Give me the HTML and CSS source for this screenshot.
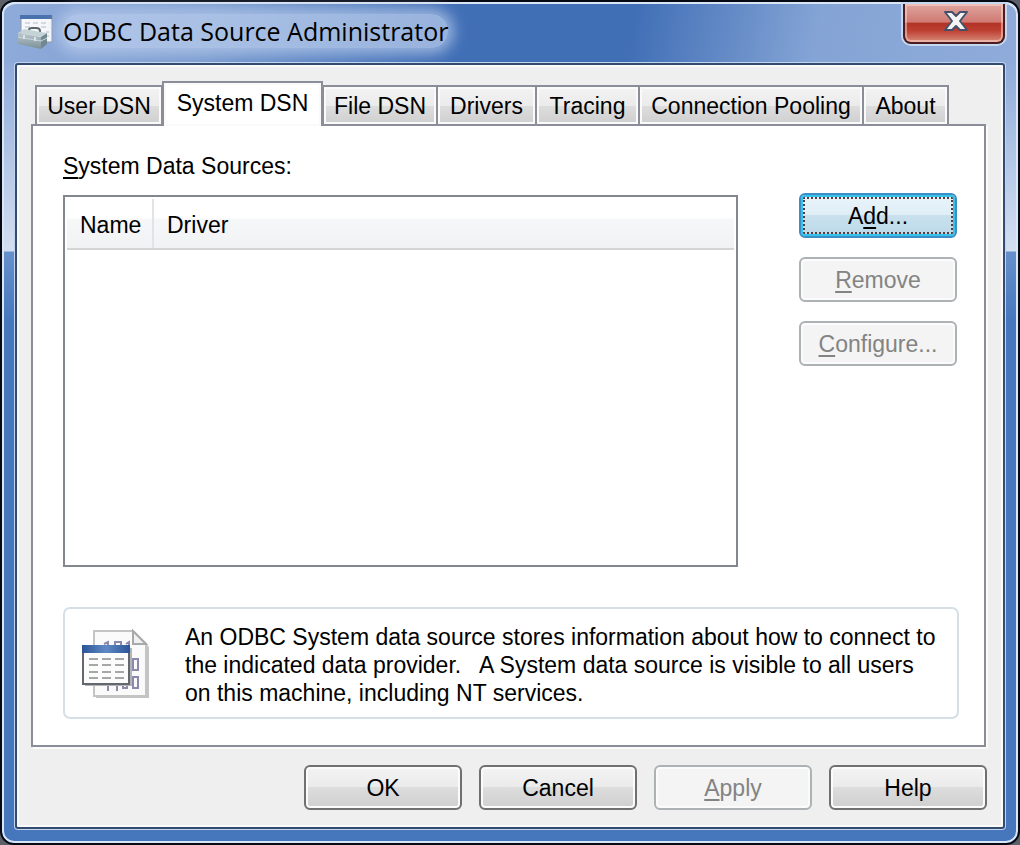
FILE: index.html
```html
<!DOCTYPE html>
<html lang="en">
<head>
  <meta charset="UTF-8">
  <meta name="viewport" content="width=device-width, initial-scale=1.0">
  <title>ODBC Data Source Administrator</title>
  <link rel="stylesheet" href="styles.css">
</head>
<body>
  <div class="window">
    <header class="titlebar">
      <svg class="app-icon" width="36" height="36" viewBox="0 0 36 36" aria-hidden="true">
        <defs>
          <linearGradient id="box" x1="0" y1="0" x2="0" y2="1">
            <stop offset="0" stop-color="#b9c8cd"/>
            <stop offset="1" stop-color="#7b8f98"/>
          </linearGradient>
        </defs>
        <rect x="3" y="2" width="31" height="26" fill="#f6f7fa" stroke="#8d99ab"/>
        <rect x="2" y="1" width="32" height="4" fill="#4a72ae"/>
        <path d="M7 9h5M15 9h5M23 9h5M7 13h5M23 13h5M28 18h3M28 22h3" stroke="#d5d9e0" stroke-width="2"/>
        <path d="M11 18v-2q0-2 3-2h4q4 0 4 3v2" fill="none" stroke="#59656b" stroke-width="2"/>
        <path d="M0 19l6-4 23 4-6 4z" fill="#c6d3d6"/>
        <path d="M0 19l23 4v12L0 30z" fill="url(#box)"/>
        <path d="M23 23l6-4v11l-6 5z" fill="#718791"/>
        <path d="M0 23l23 4 6-3" fill="none" stroke="#c9d6d9"/>
        <path d="M6 21v4M17 23v4" stroke="#dbe5e6" stroke-width="2"/>
      </svg>
      <h1 class="title">ODBC Data Source Administrator</h1>
      <button class="close-btn" type="button" aria-label="Close">
        <svg width="26" height="24" viewBox="0 0 26 24" aria-hidden="true">
          <path d="M2 3h7l4 4 4-4h7l-7 9 7 9h-7l-4-4-4 4H2l7-9z" fill="#f4f4f4" stroke="#46506a" stroke-width="2" stroke-linejoin="round"/>
        </svg>
      </button>
    </header>

    <main class="client">
      <div class="tabs" role="tablist">
        <button class="tab" role="tab" type="button">User DSN</button>
        <button class="tab active" role="tab" type="button" aria-selected="true">System DSN</button>
        <button class="tab" role="tab" type="button">File DSN</button>
        <button class="tab" role="tab" type="button">Drivers</button>
        <button class="tab" role="tab" type="button">Tracing</button>
        <button class="tab" role="tab" type="button">Connection Pooling</button>
        <button class="tab" role="tab" type="button">About</button>
      </div>

      <section class="panel" role="tabpanel">
        <div class="sources">
          <div class="source-list">
            <div class="list-label" id="list-label"><u>S</u>ystem Data Sources:</div>
            <div class="list-box">
              <table class="list-table" aria-labelledby="list-label">
                <thead>
                  <tr>
                    <th class="col-name">Name</th>
                    <th>Driver</th>
                  </tr>
                </thead>
                <tbody></tbody>
              </table>
            </div>
          </div>
          <div class="side-buttons">
            <button class="btn focused" type="button">A<u>d</u>d...</button>
            <button class="btn" type="button" disabled><u>R</u>emove</button>
            <button class="btn" type="button" disabled><u>C</u>onfigure...</button>
          </div>
        </div>

        <div class="info">
          <svg class="info-icon" width="72" height="76" viewBox="0 0 72 76" aria-hidden="true">
            <defs>
              <linearGradient id="bar" x1="0" y1="0" x2="1" y2="0">
                <stop offset="0" stop-color="#2c5598"/>
                <stop offset="0.5" stop-color="#6089c4"/>
                <stop offset="1" stop-color="#2c5598"/>
              </linearGradient>
            </defs>
            <path d="M16 6h39l14 14v51H16z" fill="#c4c4c4"/>
            <path d="M14 4h39l13 13v52H14z" fill="#fafafa" stroke="#c4c4c4" stroke-width="2"/>
            <path d="M53 4v13h13z" fill="#f0f0f0" stroke="#a9a9a9" stroke-width="2"/>
            <path d="M24 17l4-2v9M35 24v-9h6v9M46 17l3-2v9M28 58v6M37 58v6" fill="none" stroke="#8f88ad" stroke-width="2"/>
            <path d="M53 32h5v11h-5zM53 50h5v11h-5zM43 52h4v9h-4z" fill="none" stroke="#8f88ad" stroke-width="2"/>
            <path d="M5 21h47v38H5z" fill="#b2b4b8"/>
            <rect x="3" y="20" width="46" height="37" fill="#fcfcfc" stroke="#65676e" stroke-width="2"/>
            <rect x="2" y="18" width="48" height="8" fill="url(#bar)"/>
            <path d="M9 32h9M22 32h9M35 32h9M9 38h9M22 38h9M35 38h9M9 45h9M22 45h9M35 45h9M9 51h9M22 51h9M35 51h9" stroke="#a5a8a5" stroke-width="2"/>
          </svg>
          <p class="info-text">An ODBC System data source stores information about how to connect to<br>
            the indicated data provider.&nbsp;&nbsp; A System data source is visible to all users<br>
            on this machine, including NT services.</p>
        </div>
      </section>

      <footer class="actions">
        <button class="btn" type="button">OK</button>
        <button class="btn" type="button">Cancel</button>
        <button class="btn" type="button" disabled><u>A</u>pply</button>
        <button class="btn" type="button">Help</button>
      </footer>
    </main>
  </div>
</body>
</html>
```
FILE: styles.css
```css
* {
  box-sizing: border-box;
}
body {
  margin: 0;
  background: #5d6068;
  color: #000;
  font-family: "Liberation Sans", Arial, sans-serif;
  font-size: 23px;
  line-height: 28px;
}
button {
  font: inherit;
  color: inherit;
  padding: 0;
}
u {
  text-underline-offset: 3px;
  text-decoration-thickness: 2px;
}

/* Window frame */
.window {
  display: flex;
  flex-direction: column;
  min-height: 100vh;
  border: 2px solid #060a14;
  border-radius: 14px;
  background: linear-gradient(#8fabda 60px, #d3dff1 249px, #6690cb 250px, #4677bd 320px, #4677bd);
  box-shadow: inset 0 0 0 2px #dbe6f5;
}
.titlebar {
  display: flex;
  align-items: flex-start;
  height: 61px;
  margin: 0 2px;
  padding: 0 11px 0 14px;
  border-top: 2px solid #dbe6f5;
  border-radius: 12px 12px 0 0;
  background: linear-gradient(100deg, #8fabda 0%, #7b9cd0 20%, #416fb6 43%, #416fb6 62%, #84a4d5 80%, #8fabda 100%);
}
.app-icon {
  margin-top: 10px;
}
.title {
  margin: 10px 0 0 9px;
  border-radius: 16px;
  background: rgba(190, 208, 238, 0.7);
  box-shadow: 0 0 14px 6px rgba(190, 208, 238, 0.7);
  font-family: "Open Sans", "Noto Sans", sans-serif;
  font-size: 25px;
  font-weight: 400;
  line-height: 34px;
}
.close-btn {
  display: flex;
  align-items: center;
  justify-content: center;
  width: 102px;
  height: 40px;
  margin-left: auto;
  padding: 0 0 4px 4px;
  border: 2px solid #4b1d20;
  border-top: 0;
  border-radius: 0 0 8px 8px;
  background: linear-gradient(#dfa49f, #cf7a72 48%, #b23324 50%, #bd4033 70%, #d98b79);
  box-shadow: inset 0 0 0 2px rgba(255, 220, 215, 0.5), 0 0 0 2px #c6d7f0;
}
.client {
  display: flex;
  flex: 1;
  flex-direction: column;
  margin: 0 13px 14px;
  padding: 16px 16px 17px 14px;
  border: 2px solid #344b70;
  border-radius: 3px;
  background: #efefef;
  box-shadow: 0 0 0 1px #c2d5ef, inset 0 0 0 2px #fafafa;
}

/* Tabs */
.tabs {
  display: grid;
  grid-template-columns: 127px 161px 114px 99px 103px 224px 86px;
  align-items: end;
  margin-left: 4px;
}
.tab {
  height: 39px;
  border: 2px solid #8b8e98;
  border-left-width: 1px;
  border-right-width: 1px;
  border-bottom: 0;
  background: linear-gradient(#f3f3f3, #ebebeb 50%, #dddddd 52%, #cfcfcf);
  box-shadow: inset 0 0 0 2px #fafafa;
  white-space: nowrap;
}
.tab:first-child {
  border-left-width: 2px;
}
.tab:last-child {
  border-right-width: 2px;
}
.tab.active {
  z-index: 1;
  height: 45px;
  margin-bottom: -2px;
  padding-bottom: 4px;
  border-width: 2px 2px 0;
  background: #fff;
}
.panel {
  display: flex;
  flex: 1;
  flex-direction: column;
  gap: 40px;
  margin-right: 1px;
  padding: 26px 25px 26px 30px;
  border: 2px solid #8b8e98;
  background: #fff;
  box-shadow: 2px 2px 0 #fafafa;
}

/* Data sources */
.sources {
  display: flex;
  flex: 1;
  gap: 61px;
}
.source-list {
  display: flex;
  flex: 1;
  flex-direction: column;
  gap: 15px;
}
.list-box {
  flex: 1;
  padding: 2px;
  border: 2px solid #828790;
}
.list-table {
  width: 100%;
  border-collapse: collapse;
  table-layout: fixed;
}
.list-table th {
  height: 50px;
  padding: 2px 13px 0;
  border-bottom: 2px solid #d5d5d5;
  background: linear-gradient(#fff 38%, #f6f7f8 42%, #f1f2f4);
  font-weight: 400;
  text-align: left;
}
.list-table .col-name {
  width: 86px;
  padding-right: 0;
  border-right: 2px solid #e2e3e6;
}
.side-buttons {
  display: flex;
  flex-direction: column;
  gap: 19px;
  padding: 41px 2px 0 0;
}

/* Buttons */
.btn {
  width: 158px;
  height: 45px;
  border: 2px solid #707070;
  border-radius: 6px;
  background: linear-gradient(#f3f3f3, #ebebeb 48%, #dddddd 50%, #cfcfcf);
  box-shadow: inset 0 0 0 2px #fbfbfb;
}
.btn:disabled {
  border-color: #adb2b5;
  background: #f4f4f4;
  color: #838383;
}
.btn.focused {
  border-color: #3c8fc4;
  background: linear-gradient(#eaf4fa, #dfeef6 48%, #c9e1ee 50%, #bbd8e8);
  box-shadow: inset 0 0 0 2px #35c3ee;
  outline: 2px dotted #5c3a3a;
  outline-offset: -6px;
}
.actions {
  display: flex;
  justify-content: flex-end;
  gap: 17px;
  padding-top: 18px;
}

/* Description */
.info {
  display: flex;
  align-items: center;
  gap: 33px;
  height: 112px;
  padding: 4px 15px 0;
  border: 2px solid #d5dfe5;
  border-radius: 7px;
}
.info-icon {
  flex: none;
}
.info-text {
  margin: 0;
  white-space: nowrap;
}
```
